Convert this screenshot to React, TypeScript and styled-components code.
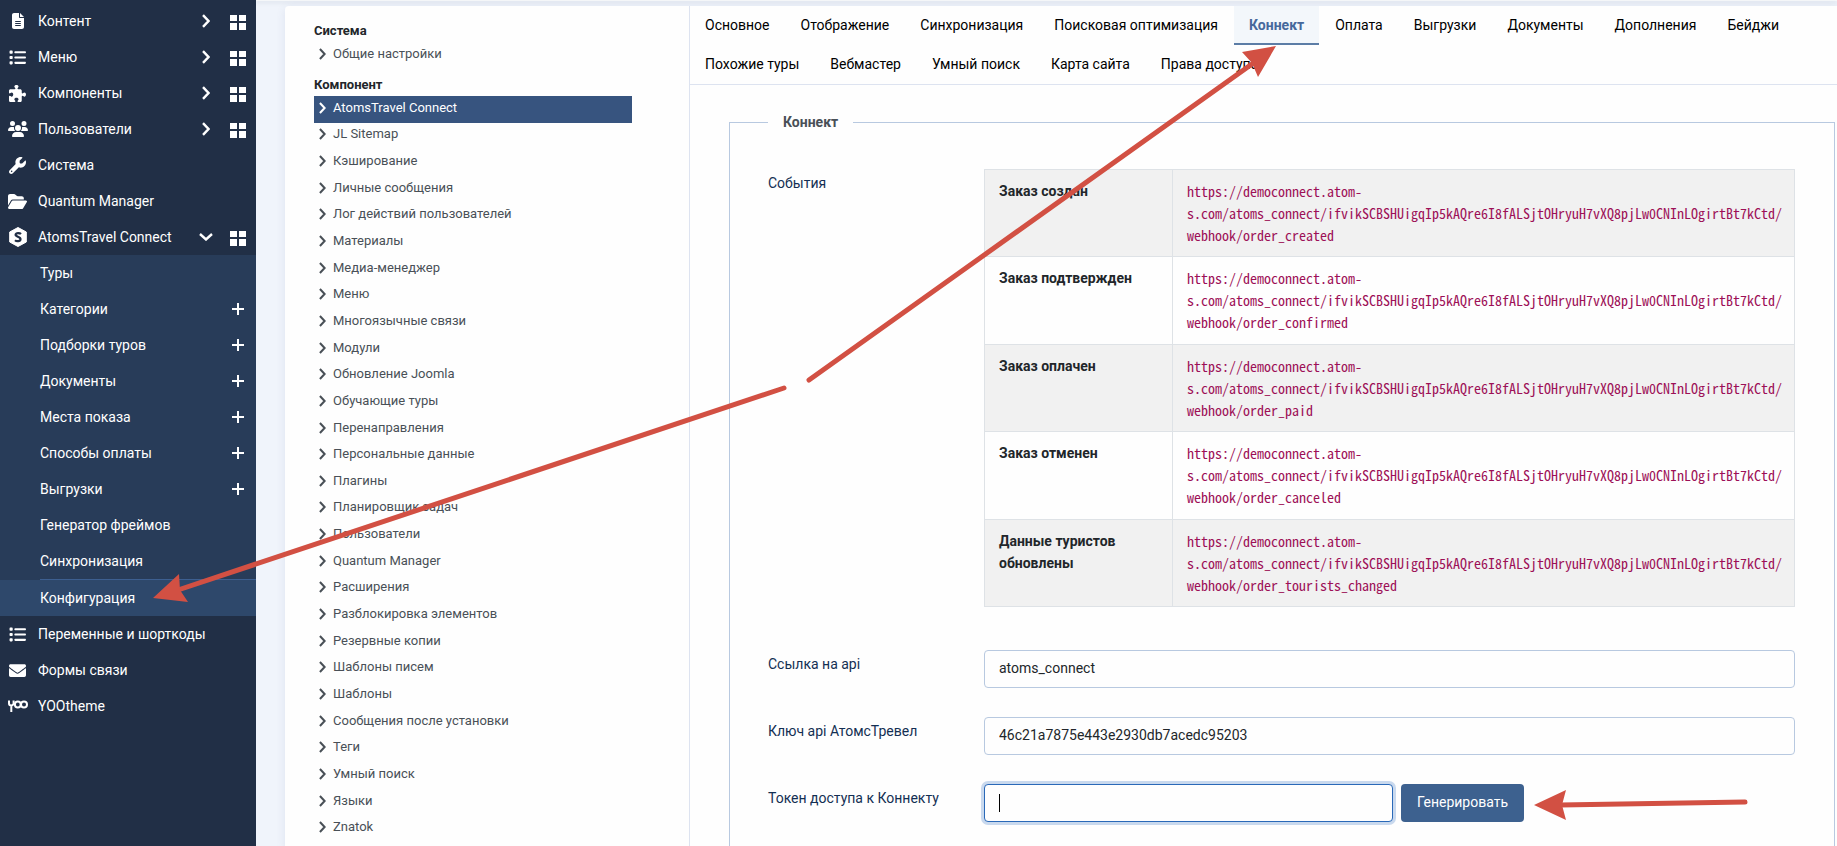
import React from 'react';
import styled, { createGlobalStyle, css } from 'styled-components';
import {
  FaFileLines,
  FaList,
  FaPuzzlePiece,
  FaUsers,
  FaWrench,
  FaFolderOpen,
} from 'react-icons/fa6';
import { FaEnvelope } from 'react-icons/fa';

const GlobalStyle = createGlobalStyle`
  *, *::before, *::after { box-sizing: border-box; }
  body {
    margin: 0;
    font-family: Roboto, "Liberation Sans", sans-serif;
    font-size: 14px;
    line-height: 22px;
    color: #22262a;
    background: #f0f4fb;
  }
  a { color: inherit; text-decoration: none; }
  ul { list-style: none; margin: 0; padding: 0; }
`;

const Layout = styled.div`
  position: relative;
  display: flex;
  min-height: 100vh;
  overflow: hidden;
`;

/* ---------- Left menu ---------- */

const Sidebar = styled.nav`
  flex: 0 0 256px;
  padding-top: 3px;
  color: #fff;
  background: #212f46;
`;

const MenuLink = styled.a`
  display: flex;
  flex: 1;
  align-items: center;
  height: 36px;
`;

const MenuRow = styled.li`
  display: flex;
  align-items: center;
  height: 36px;
  padding-right: 10px;
`;

const IconSlot = styled.span`
  display: flex;
  justify-content: center;
  width: 35px;
  margin-right: 3px;
`;

const Toggle = styled.span`
  display: flex;
  justify-content: center;
  width: 16px;
  margin-right: 16px;
`;

const IconLink = styled.a`
  display: flex;
  justify-content: center;
  width: 16px;
`;

const SubMenu = styled.ul`
  background: #283c59;
`;

const SubRow = styled.li<{ $current?: boolean }>`
  display: flex;
  align-items: center;
  height: 36px;
  padding: 0 10px 0 40px;
  ${(p) => p.$current && css`background: #2e486b;`}
`;

const SubDivider = styled.li`
  height: 1px;
  margin-left: 40px;
  background: #3d5f90;
`;

/* ---------- Content card ---------- */

const Main = styled.main`
  display: flex;
  flex: 1;
  flex-direction: column;
  min-width: 0;
`;

const TopBar = styled.div`
  height: 1px;
  background: #f5f7f9;
  box-shadow: 0 1px 4px rgba(40, 60, 80, 0.25);
`;

const Card = styled.div`
  display: flex;
  flex: 1;
  margin: 5px 0 0 29px;
  background: #fefefe;
  border-top-left-radius: 4px;
  box-shadow: 0 2px 10px rgba(57, 79, 140, 0.1);
`;

const Components = styled.aside`
  flex: 0 0 404px;
  padding: 14px 57px 6px 29px;
  font-size: 13px;
  color: #495057;
`;

const GroupTitle = styled.h2`
  margin: 0;
  font-size: 13px;
  font-weight: 700;
  line-height: 22px;
  color: #22262a;
`;

const GroupList = styled.ul<{ $height: number }>`
  display: grid;
  grid-auto-rows: 1fr;
  height: ${(p) => p.$height}px;
  margin-bottom: 6px;
  &:last-child { margin-bottom: 0; }
`;

const ComponentLink = styled.a<{ $active?: boolean }>`
  display: flex;
  align-items: center;
  gap: 7px;
  height: 100%;
  padding: 0 5px 3px;
  ${(p) => p.$active && css`color: #fff; background: #37547f;`}
`;

const Settings = styled.section`
  display: flex;
  flex: 1;
  flex-direction: column;
  min-width: 0;
  border-left: 1px solid #dde3f0;
`;

const Tabs = styled.div`
  display: flex;
  flex-wrap: wrap;
  column-gap: 1px;
  padding-right: 26px;
  border-bottom: 1px solid #dde3f0;
`;

const Tab = styled.button<{ $active?: boolean }>`
  height: 39px;
  padding: 0 15px 2px;
  border: 0;
  font: inherit;
  color: #000;
  background: transparent;
  ${(p) => p.$active && css`
    font-weight: 700;
    color: #45689b;
    background: #f3f7fb;
    box-shadow: inset 0 -2px #5c7da6;
  `}
`;

const Fieldset = styled.fieldset`
  display: flex;
  flex: 1;
  flex-direction: column;
  min-width: 0;
  margin: 26px 2px 0 39px;
  padding: 36px 39px 24px 38px;
  border: 1px solid #b8c9e0;
  border-bottom: 0;
`;

const Legend = styled.legend`
  padding: 0 15px;
  font-weight: 700;
  color: #495057;
`;

const Field = styled.div<{ $wide?: boolean }>`
  display: grid;
  grid-template-columns: 216px minmax(0, 1fr);
  margin-bottom: ${(p) => (p.$wide ? 43 : 29)}px;
  &:last-child { margin-bottom: 0; }
`;

const labelStyle = css`
  padding-top: 3px;
  color: #132f53;
`;
const Label = styled.label`${labelStyle}`;
const Caption = styled.div`${labelStyle}`;

const EventTable = styled.table`
  width: 100%;
  height: 438px;
  table-layout: fixed;
  border-collapse: collapse;
  th, td {
    padding: 10px 14px;
    border: 1px solid #dee2e6;
    text-align: left;
    vertical-align: top;
  }
  th { width: 188px; font-weight: 700; }
  tr:nth-child(odd) { background: #f1f1f1; }
`;

const Hook = styled.code`
  display: block;
  font-family: "Noto Sans Mono CJK SC", "DejaVu Sans Mono", monospace;
  font-size: 14px;
  line-height: 22px;
  white-space: nowrap;
  color: #9d1057;
`;

const TextInput = styled.input<{ $focused?: boolean }>`
  width: 100%;
  height: 38px;
  padding: 0 14px 2px;
  border: 1px solid #b8c9e0;
  border-radius: 4px;
  outline: 0;
  font: inherit;
  color: #22262a;
  background: #fefefe;
  ${(p) => p.$focused && css`
    border-color: #2a69b8;
    box-shadow: 0 0 0 3px #c9d9ee;
  `}
`;

const TokenRow = styled.div`
  display: flex;
  gap: 8px;
`;

const TokenBox = styled.div`
  position: relative;
  flex: 0 1 409px;
`;

const Caret = styled.span`
  position: absolute;
  top: 10px;
  left: 15px;
  width: 1px;
  height: 18px;
  background: #000;
`;

const PrimaryButton = styled.button`
  height: 38px;
  padding: 0 16px 2px;
  border: 0;
  border-radius: 4px;
  font: inherit;
  color: #fff;
  background: #3d618f;
`;

/* ---------- Drawings ---------- */

const Annotations = styled.svg`
  position: absolute;
  top: 0;
  left: 0;
  pointer-events: none;
`;

const ChevronRight = ({ size = 14 }: { size?: number }) => (
  <svg width={size / 2 + 1} height={size} viewBox="0 0 8 14" fill="none" stroke="currentColor" strokeWidth="2.400">
    <path d="M1 1.200 6.500 7 1 12.800" />
  </svg>
);

const ChevronDown = () => (
  <svg width="14" height="8" viewBox="0 0 14 8" fill="none" stroke="currentColor" strokeWidth="2.400">
    <path d="M1 1 7 6.500 13 1" />
  </svg>
);

const GridIcon = () => (
  <svg width="16" height="18" viewBox="0 0 16 18" fill="currentColor">
    <path d="M0 3h7v6H0zM9 3h7v6H9zM0 11h7v7H0zM9 11h7v7H9z" />
  </svg>
);

const PlusIcon = () => (
  <svg width="12" height="12" viewBox="0 0 12 12" stroke="currentColor" strokeWidth="2">
    <path d="M6 0v12M0 6h12" />
  </svg>
);

const HexagonIcon = () => (
  <svg width="18" height="20" viewBox="0 0 18 20">
    <path d="M9 .5 17.3 5v10L9 19.5.7 15V5z" fill="#fff" stroke="#fff" strokeLinejoin="round" />
    <path
      d="M12 7C11 6 7 5.400 6.600 7.700 6.300 10 11.800 9.600 11.500 12.300 11.200 14.700 7.300 14.400 6 13.200"
      fill="none"
      stroke="#212f46"
      strokeWidth="2.200"
    />
  </svg>
);

const YooIcon = () => (
  <svg width="20" height="12" viewBox="0 0 20 12" fill="none" stroke="#fff" strokeWidth="2">
    <path d="M1 .5v2.700a2.300 2.300 0 0 0 4.600 0V.5M3.300 5.500V12" />
    <circle cx="9.800" cy="4.500" r="2.900" />
    <circle cx="16" cy="4.500" r="3" />
  </svg>
);

/* ---------- Data ---------- */

type MenuItem = { label: string; icon: React.ReactNode; toggle?: 'right' | 'down' };

const topMenu: MenuItem[] = [
  { label: 'Контент', icon: <FaFileLines size={16} />, toggle: 'right' },
  { label: 'Меню', icon: <FaList size={17} />, toggle: 'right' },
  { label: 'Компоненты', icon: <FaPuzzlePiece size={17} />, toggle: 'right' },
  { label: 'Пользователи', icon: <FaUsers size={20} />, toggle: 'right' },
  { label: 'Система', icon: <FaWrench size={17} /> },
  { label: 'Quantum Manager', icon: <FaFolderOpen size={19} /> },
  { label: 'AtomsTravel Connect', icon: <HexagonIcon />, toggle: 'down' },
];

const bottomMenu: MenuItem[] = [
  { label: 'Переменные и шорткоды', icon: <FaList size={17} /> },
  { label: 'Формы связи', icon: <FaEnvelope size={17} /> },
  { label: 'YOOtheme', icon: <YooIcon /> },
];

const subMenu: { label: string; add?: boolean }[] = [
  { label: 'Туры' },
  { label: 'Категории', add: true },
  { label: 'Подборки туров', add: true },
  { label: 'Документы', add: true },
  { label: 'Места показа', add: true },
  { label: 'Способы оплаты', add: true },
  { label: 'Выгрузки', add: true },
  { label: 'Генератор фреймов' },
  { label: 'Синхронизация' },
];

const components = [
  'AtomsTravel Connect', 'JL Sitemap', 'Кэширование', 'Личные сообщения',
  'Лог действий пользователей', 'Материалы', 'Медиа-менеджер', 'Меню',
  'Многоязычные связи', 'Модули', 'Обновление Joomla', 'Обучающие туры',
  'Перенаправления', 'Персональные данные', 'Плагины', 'Планировщик задач',
  'Пользователи', 'Quantum Manager', 'Расширения', 'Разблокировка элементов',
  'Резервные копии', 'Шаблоны писем', 'Шаблоны', 'Сообщения после установки',
  'Теги', 'Умный поиск', 'Языки', 'Znatok',
];

const tabs = [
  'Основное', 'Отображение', 'Синхронизация', 'Поисковая оптимизация', 'Коннект',
  'Оплата', 'Выгрузки', 'Документы', 'Дополнения', 'Бейджи', 'Похожие туры',
  'Вебмастер', 'Умный поиск', 'Карта сайта', 'Права доступа',
];

const events = [
  ['Заказ создан', 'order_created'],
  ['Заказ подтвержден', 'order_confirmed'],
  ['Заказ оплачен', 'order_paid'],
  ['Заказ отменен', 'order_canceled'],
  ['Данные туристов обновлены', 'order_tourists_changed'],
];

const MenuEntry = ({ item }: { item: MenuItem }) => (
  <MenuRow>
    <MenuLink href="#">
      <IconSlot>{item.icon}</IconSlot>
      {item.label}
    </MenuLink>
    {item.toggle && (
      <>
        <Toggle>{item.toggle === 'down' ? <ChevronDown /> : <ChevronRight />}</Toggle>
        <IconLink href="#" aria-label={`Панель: ${item.label}`}><GridIcon /></IconLink>
      </>
    )}
  </MenuRow>
);

const ComponentEntry = ({ label, active }: { label: string; active?: boolean }) => (
  <li>
    <ComponentLink href="#" $active={active}>
      <ChevronRight size={12} />
      {label}
    </ComponentLink>
  </li>
);

export default function App() {
  return (
    <Layout>
      <GlobalStyle />
      <Sidebar>
        <ul>
          {topMenu.map((item) => <MenuEntry key={item.label} item={item} />)}
        </ul>
        <SubMenu>
          {subMenu.map((item) => (
            <SubRow key={item.label}>
              <MenuLink href="#">{item.label}</MenuLink>
              {item.add && <IconLink href="#" aria-label={`Добавить: ${item.label}`}><PlusIcon /></IconLink>}
            </SubRow>
          ))}
          <SubDivider role="separator" />
          <SubRow $current>
            <MenuLink href="#" aria-current="page">Конфигурация</MenuLink>
          </SubRow>
        </SubMenu>
        <ul>
          {bottomMenu.map((item) => <MenuEntry key={item.label} item={item} />)}
        </ul>
      </Sidebar>

      <Main>
        <TopBar />
        <Card>
          <Components>
            <GroupTitle>Система</GroupTitle>
            <GroupList $height={26}>
              <ComponentEntry label="Общие настройки" />
            </GroupList>
            <GroupTitle>Компонент</GroupTitle>
            <GroupList $height={746}>
              {components.map((label, i) => (
                <ComponentEntry key={label} label={label} active={i === 0} />
              ))}
            </GroupList>
          </Components>

          <Settings>
            <Tabs role="tablist">
              {tabs.map((label) => (
                <Tab key={label} type="button" role="tab" aria-selected={label === 'Коннект'} $active={label === 'Коннект'}>
                  {label}
                </Tab>
              ))}
            </Tabs>

            <Fieldset>
              <Legend>Коннект</Legend>
              <Field $wide>
                <Caption>События</Caption>
                <EventTable>
                  <tbody>
                    {events.map(([title, hook]) => (
                      <tr key={hook}>
                        <th scope="row">{title}</th>
                        <td>
                          <Hook>
                            https://democonnect.atom-<br />
                            s.com/atoms_connect/ifvikSCBSHUigqIp5kAQre6I8fALSjtOHryuH7vXQ8pjLw0CNInLOgirtBt7kCtd/<br />
                            webhook/{hook}
                          </Hook>
                        </td>
                      </tr>
                    ))}
                  </tbody>
                </EventTable>
              </Field>
              <Field>
                <Label htmlFor="api-link">Ссылка на api</Label>
                <TextInput id="api-link" type="text" defaultValue="atoms_connect" />
              </Field>
              <Field>
                <Label htmlFor="api-key">Ключ api АтомсТревел</Label>
                <TextInput id="api-key" type="text" defaultValue="46c21a7875e443e2930db7acedc95203" />
              </Field>
              <Field>
                <Label htmlFor="token">Токен доступа к Коннекту</Label>
                <TokenRow>
                  <TokenBox>
                    <TextInput id="token" type="text" $focused />
                    <Caret />
                  </TokenBox>
                  <PrimaryButton type="button">Генерировать</PrimaryButton>
                </TokenRow>
              </Field>
            </Fieldset>
          </Settings>
        </Card>
      </Main>

      <Annotations width="1837" height="846" viewBox="0 0 1837 846" fill="#d25043" stroke="#d25043" aria-hidden="true">
        <g strokeWidth="5" strokeLinecap="round">
          <path d="M784 388 178 590" />
          <path d="M809 380 1252 64" />
          <path d="M1745 802 1560 805" />
        </g>
        <g stroke="none">
          <path d="M153 598 179 574 180 590 188 602z" />
          <path d="M1276 46 1242 52 1252 63 1258 77z" />
          <path d="M1534 805 1566 790 1562 805 1566 820z" />
        </g>
      </Annotations>
    </Layout>
  );
}
